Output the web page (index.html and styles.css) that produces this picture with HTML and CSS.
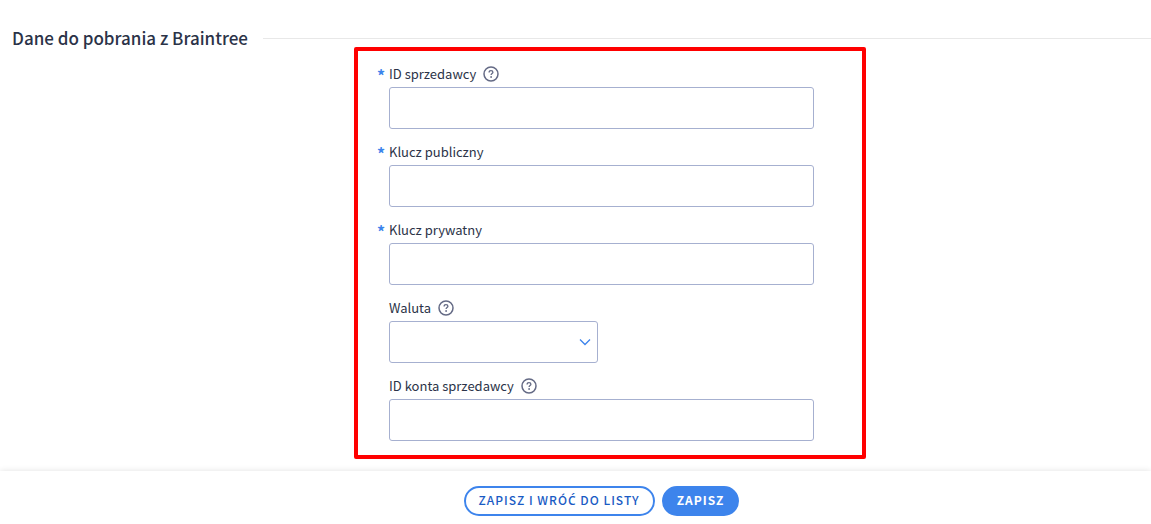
FILE: index.html
```
<!DOCTYPE html>
<html lang="pl">
<head>
    <meta charset="UTF-8">
    <meta name="viewport" content="width=device-width, initial-scale=1">
    <title>Dane do pobrania z Braintree</title>
    <link rel="stylesheet" href="styles.css">
</head>
<body>
    <svg class="sprite" aria-hidden="true">
        <symbol id="help" viewBox="0 0 16 16">
            <circle cx="8" cy="8" r="7" fill="none" stroke="currentColor" stroke-width="1.5"/>
            <path d="M6.1 6.4C6.1 5.2 6.9 4.6 8 4.6s1.9.6 1.9 1.6c0 1.3-1.8 1.4-1.8 2.9" fill="none" stroke="currentColor" stroke-width="1.3"/>
            <circle cx="8.1" cy="11" r=".9" fill="currentColor"/>
        </symbol>
    </svg>
    <form>
        <h2 class="section-title">Dane do pobrania z Braintree</h2>
        <div class="section">
            <div class="fields">
                <div class="field required">
                    <label for="merchant">ID sprzedawcy</label>
                    <svg class="help"><use href="#help"/></svg>
                    <input type="text" id="merchant" name="merchant">
                </div>
                <div class="field required">
                    <label for="public-key">Klucz publiczny</label>
                    <input type="text" id="public-key" name="public-key">
                </div>
                <div class="field required">
                    <label for="private-key">Klucz prywatny</label>
                    <input type="text" id="private-key" name="private-key">
                </div>
                <div class="field">
                    <label for="currency">Waluta</label>
                    <svg class="help"><use href="#help"/></svg>
                    <div class="select">
                        <select id="currency" name="currency">
                            <option value=""></option>
                        </select>
                        <svg class="arrow" viewBox="0 0 12 8"><path d="M1 1.5l5 5 5-5" fill="none" stroke="currentColor" stroke-width="1.3"/></svg>
                    </div>
                </div>
                <div class="field">
                    <label for="account">ID konta sprzedawcy</label>
                    <svg class="help"><use href="#help"/></svg>
                    <input type="text" id="account" name="account">
                </div>
            </div>
        </div>
        <div class="actions">
            <button type="submit" class="btn">Zapisz i wró<span class="accent">ć</span> do listy</button>
            <button type="submit" class="btn btn-primary">Zapisz</button>
        </div>
    </form>
</body>
</html>
```
FILE: styles.css
```
*{
    box-sizing: border-box;
}
body{
    margin: 0;
    background-color: #fff;
    color: #2b3348;
    font-family: "Noto Sans CJK JP", "Open Sans", sans-serif;
    font-size: 13px;
}
.sprite{
    display: none;
}
.section-title{
    display: flex;
    align-items: center;
    gap: 15px;
    margin: 0;
    padding: 30px 0 1px 12px;
    font-size: 17px;
    font-weight: 500;
    line-height: 16px;
}
.section-title::after{
    content: "";
    flex: 1;
    height: 1px;
    background-color: #e8e8e8;
}
/* form column, a bit right of the centre */
.section{
    display: grid;
    grid-template-columns: 354fr 512fr 285fr;
    padding-bottom: 12px;
}
.fields{
    grid-column: 2;
    display: flex;
    flex-direction: column;
    gap: 12px;
    padding: 12px 48px 14px 31px;
    border: 4px solid #f00;
    border-radius: 2px;
}
.field{
    position: relative;
    display: flex;
    flex-wrap: wrap;
    align-items: center;
    gap: 2px 7px;
}
.field label{
    line-height: 22px;
}
.required::before{
    content: "*";
    position: absolute;
    top: 0;
    left: -12px;
    color: #3d84ec;
    font-size: 16px;
    font-weight: bold;
    line-height: 24px;
}
.help{
    width: 16px;
    height: 16px;
    color: #646a85;
}
.field input,
.field select{
    width: 100%;
    height: 42px;
    padding: 0 12px;
    border: 1px solid #a6b0d0;
    border-radius: 3px;
    background-color: #fff;
    color: inherit;
    font: inherit;
}
.select{
    position: relative;
    flex-basis: 100%;
}
.field select{
    display: block;
    max-width: 209px;
    appearance: none;
}
.arrow{
    position: absolute;
    top: 17px;
    left: 190px;
    width: 12px;
    height: 8px;
    color: #3d84ec;
    pointer-events: none;
}
.actions{
    display: flex;
    justify-content: center;
    gap: 7px;
    padding: 15px 0 8px 52px;
    box-shadow: 0 0 6px rgba(0, 0, 0, 0.12);
}
.btn{
    height: 30px;
    padding: 0 13px 2px;
    border: 2px solid #3d84ec;
    border-radius: 15px;
    background-color: #fff;
    color: #1a5bc4;
    font-family: inherit;
    font-size: 12px;
    font-weight: 500;
    letter-spacing: 1px;
    line-height: 24px;
    text-transform: uppercase;
    cursor: pointer;
}
/* the main font has no Ć */
.accent{
    font-family: "Open Sans", sans-serif;
    font-weight: 600;
}
.btn-primary{
    background-color: #3d84ec;
    color: #fff;
    font-weight: bold;
}
```
